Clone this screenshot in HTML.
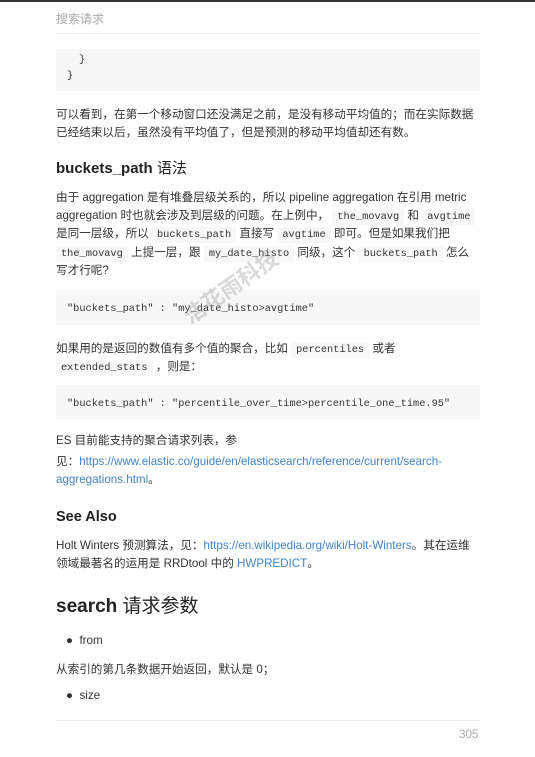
<!DOCTYPE html>
<html><head><meta charset="utf-8"><style>
body{margin:0;width:535px;height:757px;background:#fff;position:relative;overflow:hidden;font-family:"Liberation Sans","Noto Sans CJK SC",sans-serif;color:#333;font-size:11.6px}
.a{position:absolute;left:56px;white-space:nowrap;line-height:18px}
.code{position:absolute;left:56px;width:424px;background:#f7f7f7}
.c{font-family:"Liberation Mono",monospace;font-size:10.3px;background:#f7f7f7;padding:2px 5px;color:#333}
a{color:#4183c4;text-decoration:none}
</style></head><body>
<div style="position:absolute;left:0;top:0;width:535px;height:2px;background:#333"></div>
<div class="a" style="top:10px;color:#aaa;font-size:12px">搜索请求</div>
<div style="position:absolute;left:56px;top:33px;width:424px;height:1px;background:#eee"></div>
<div class="code" style="top:49px;height:42px"></div>
<div class="a c" style="top:49px;background:none;left:74px">}</div>
<div class="a c" style="top:65px;background:none;left:62px">}</div>
<div class="a" style="top:106px">可以看到，在第一个移动窗口还没满足之前，是没有移动平均值的；而在实际数据</div>
<div class="a" style="top:124px">已经结束以后，虽然没有平均值了，但是预测的移动平均值却还有数。</div>
<div class="a" style="top:158px;font-size:15px;font-weight:bold;line-height:22px;color:#222">buckets_path <span style="font-weight:normal">语法</span></div>
<div class="a" style="top:189px">由于 aggregation 是有堆叠层级关系的，所以 pipeline aggregation 在引用 metric</div>
<div class="a" style="top:207px">aggregation 时也就会涉及到层级的问题。在上例中， <span class="c">the_movavg</span> 和 <span class="c">avgtime</span></div>
<div class="a" style="top:225px">是同一层级，所以 <span class="c">buckets_path</span> 直接写 <span class="c">avgtime</span> 即可。但是如果我们把</div>
<div class="a" style="top:244px"><span class="c">the_movavg</span> 上提一层，跟 <span class="c">my_date_histo</span> 同级，这个 <span class="c">buckets_path</span> 怎么</div>
<div class="a" style="top:262px">写才行呢?</div>
<div class="code" style="top:290px;height:35px"></div>
<div class="a c" style="top:298px;background:none;left:62px">"buckets_path" : "my_date_histo&gt;avgtime"</div>
<div class="a" style="top:340px">如果用的是返回的数值有多个值的聚合，比如 <span class="c">percentiles</span> 或者</div>
<div class="a" style="top:358px"><span class="c">extended_stats</span> ，则是：</div>
<div class="code" style="top:385px;height:35px"></div>
<div class="a c" style="top:393px;background:none;left:62px">"buckets_path" : "percentile_over_time&gt;percentile_one_time.95"</div>
<div class="a" style="top:432px">ES 目前能支持的聚合请求列表，参</div>
<div class="a" style="top:453px">见：<a>https://www.elastic.co/guide/en/elasticsearch/reference/current/search-</a></div>
<div class="a" style="top:471px"><a>aggregations.html</a>。</div>
<div class="a" style="top:506px;font-size:14.5px;font-weight:bold;line-height:22px;color:#222">See Also</div>
<div class="a" style="top:537px">Holt Winters 预测算法，见：<a>https://en.wikipedia.org/wiki/Holt-Winters</a>。其在运维</div>
<div class="a" style="top:555px">领域最著名的运用是 RRDtool 中的 <a>HWPREDICT</a>。</div>
<div class="a" style="top:593px;font-size:19px;font-weight:bold;line-height:28px;color:#222">search <span style="font-weight:normal">请求参数</span></div>
<div class="a" style="top:632px;left:66px">● &nbsp;from</div>
<div class="a" style="top:661px">从索引的第几条数据开始返回，默认是 0；</div>
<div class="a" style="top:687px;left:66px">● &nbsp;size</div>
<div style="position:absolute;left:56px;top:720px;width:424px;height:1px;background:#eee"></div>
<div class="a" style="top:726px;left:459px;color:#aaa">305</div>
<div style="position:absolute;left:175px;top:270px;transform:rotate(-35deg);font-size:22px;color:rgba(150,150,150,0.35);font-weight:bold;white-space:nowrap">浩花雨科技</div>
</body></html>
